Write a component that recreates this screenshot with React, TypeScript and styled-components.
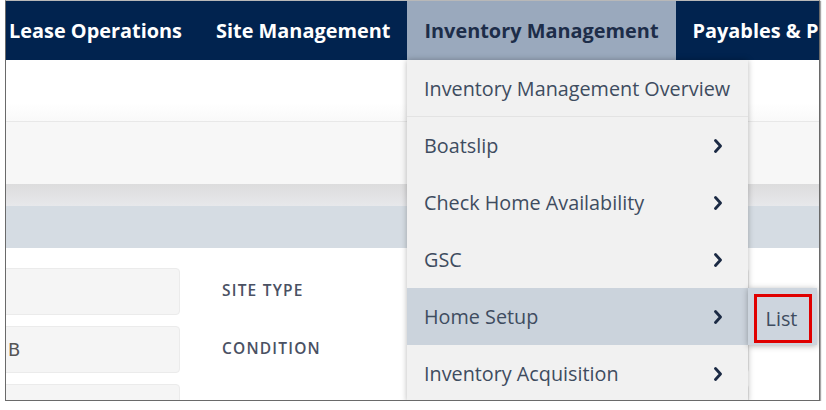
import React from 'react'
import styled, { createGlobalStyle } from 'styled-components'

const GlobalStyle = createGlobalStyle`
    html, body {
        margin: 0;
        padding: 0;
        background: #ffffff;
    }
    body {
        font-family: 'Open Sans', 'Liberation Sans', sans-serif;
    }
`

const Frame = styled.div`
    position: relative;
    width: 813px;
    height: 399px;
    margin-left: 5px;
    border: 1px solid #6a6a6a;
    border-top-color: #b8b8b8;
    box-shadow: 1px 1px 1px rgba(0, 0, 0, 0.35);
    overflow: hidden;
    background: #ffffff;
`

const NavBar = styled.div`
    display: flex;
    height: 59px;
    background-color: #01234f;
    margin-left: -14px;
    white-space: nowrap;
`

const NavTab = styled.div<{ active?: boolean }>`
    display: flex;
    align-items: center;
    padding: 0 17px;
    font-size: 19.9px;
    font-weight: 700;
    color: ${props => (props.active ? '#1d2d49' : '#ffffff')};
    background-color: ${props => (props.active ? '#9aa9bd' : 'transparent')};
    flex-shrink: 0;
`

const WhiteBand = styled.div`
    height: 61px;
    background: linear-gradient(#ffffff 70%, #f9f9f9);
    border-bottom: 1px solid #e8e8e8;
`

const GreyBand = styled.div`
    height: 62px;
    background-color: #f7f7f7;
`

const ShadeBand = styled.div`
    height: 22px;
    background: linear-gradient(#dcdcdd, #e7e8eb);
`

const SectionBar = styled.div`
    height: 42px;
    background-color: #d5dce3;
`

const Form = styled.div`
    display: flex;
    flex-direction: column;
    gap: 11px;
    padding-top: 20px;
`

const FormRow = styled.div`
    display: flex;
    align-items: center;
`

const Field = styled.div<{ width: number }>`
    box-sizing: border-box;
    width: ${props => props.width}px;
    height: 47px;
    display: flex;
    align-items: center;
    background-color: #f5f5f5;
    border: 1px solid #ebebeb;
    border-radius: 4px;
    font-family: 'DejaVu Sans', 'Liberation Sans', sans-serif;
    font-size: 18px;
    color: #555555;
`

const LeftField = styled(Field)`
    margin-left: -7px;
    padding-left: 8px;
`

const FieldLabel = styled.div`
    width: 150px;
    margin-left: 42px;
    margin-top: -3px;
    font-family: 'Open Sans', 'Liberation Sans', sans-serif;
    font-size: 15.5px;
    font-weight: 600;
    letter-spacing: 1.2px;
    color: #4a5163;
`

const RightField = styled(Field)`
    margin-left: 182px;
`

const Dropdown = styled.div`
    position: absolute;
    top: 59px;
    left: 401px;
    width: 341px;
    background-color: #f1f1f1;
    box-shadow: 0 0 6px rgba(0, 0, 0, 0.28);
    z-index: 5;
`

const MenuItem = styled.div<{ active?: boolean; first?: boolean }>`
    display: flex;
    align-items: center;
    justify-content: space-between;
    height: ${props => (props.first ? 56 : 57)}px;
    padding: 0 25px 0 17px;
    font-size: 19.8px;
    white-space: nowrap;
    color: #3e4c60;
    background-color: ${props => (props.active ? '#cbd3dc' : 'transparent')};
    border-bottom: ${props => (props.first ? '1px solid #e3e3e3' : 'none')};
`

const Chevron = () => (
    <svg width="10" height="14" viewBox="0 0 10 14">
        <polyline
            points="2.5,1.5 7.5,7 2.5,12.5"
            fill="none"
            stroke="#1b2a44"
            strokeWidth="2.8"
            strokeLinecap="round"
            strokeLinejoin="round"
        />
    </svg>
)

const SubMenu = styled.div`
    position: absolute;
    top: 287px;
    left: 742px;
    padding: 6px 5px 2px 6px;
    background-color: #cdd5de;
    box-shadow: 0 1px 6px rgba(0, 0, 0, 0.3);
    z-index: 6;
`

const SubMenuItem = styled.div`
    box-sizing: border-box;
    width: 58px;
    height: 49px;
    display: flex;
    align-items: center;
    justify-content: center;
    padding-right: 3px;
    border: 3px solid #e00000;
    font-size: 19.8px;
    color: #3e4c60;
`

const menuItems = [
    { label: 'Boatslip' },
    { label: 'Check Home Availability' },
    { label: 'GSC' },
    { label: 'Home Setup', active: true },
    { label: 'Inventory Acquisition' },
]

const App: React.FC = () => {
    return (
        <>
            <GlobalStyle />
            <Frame>
                <NavBar>
                    <NavTab>Lease Operations</NavTab>
                    <NavTab>Site Management</NavTab>
                    <NavTab active>Inventory Management</NavTab>
                    <NavTab>Payables &amp; Purchasing</NavTab>
                </NavBar>
                <WhiteBand />
                <GreyBand />
                <ShadeBand />
                <SectionBar />
                <Form>
                    <FormRow>
                        <LeftField width={181} />
                        <FieldLabel>SITE TYPE</FieldLabel>
                        <RightField width={195} />
                    </FormRow>
                    <FormRow>
                        <LeftField width={181}>B</LeftField>
                        <FieldLabel>CONDITION</FieldLabel>
                        <RightField width={195} />
                    </FormRow>
                    <FormRow>
                        <LeftField width={181} />
                        <FieldLabel />
                        <RightField width={195} />
                    </FormRow>
                </Form>

                <Dropdown>
                    <MenuItem first>Inventory Management Overview</MenuItem>
                    {menuItems.map(item => (
                        <MenuItem key={item.label} active={item.active}>
                            {item.label}
                            <Chevron />
                        </MenuItem>
                    ))}
                </Dropdown>
                <SubMenu>
                    <SubMenuItem>List</SubMenuItem>
                </SubMenu>
            </Frame>
        </>
    )
}

export default App
